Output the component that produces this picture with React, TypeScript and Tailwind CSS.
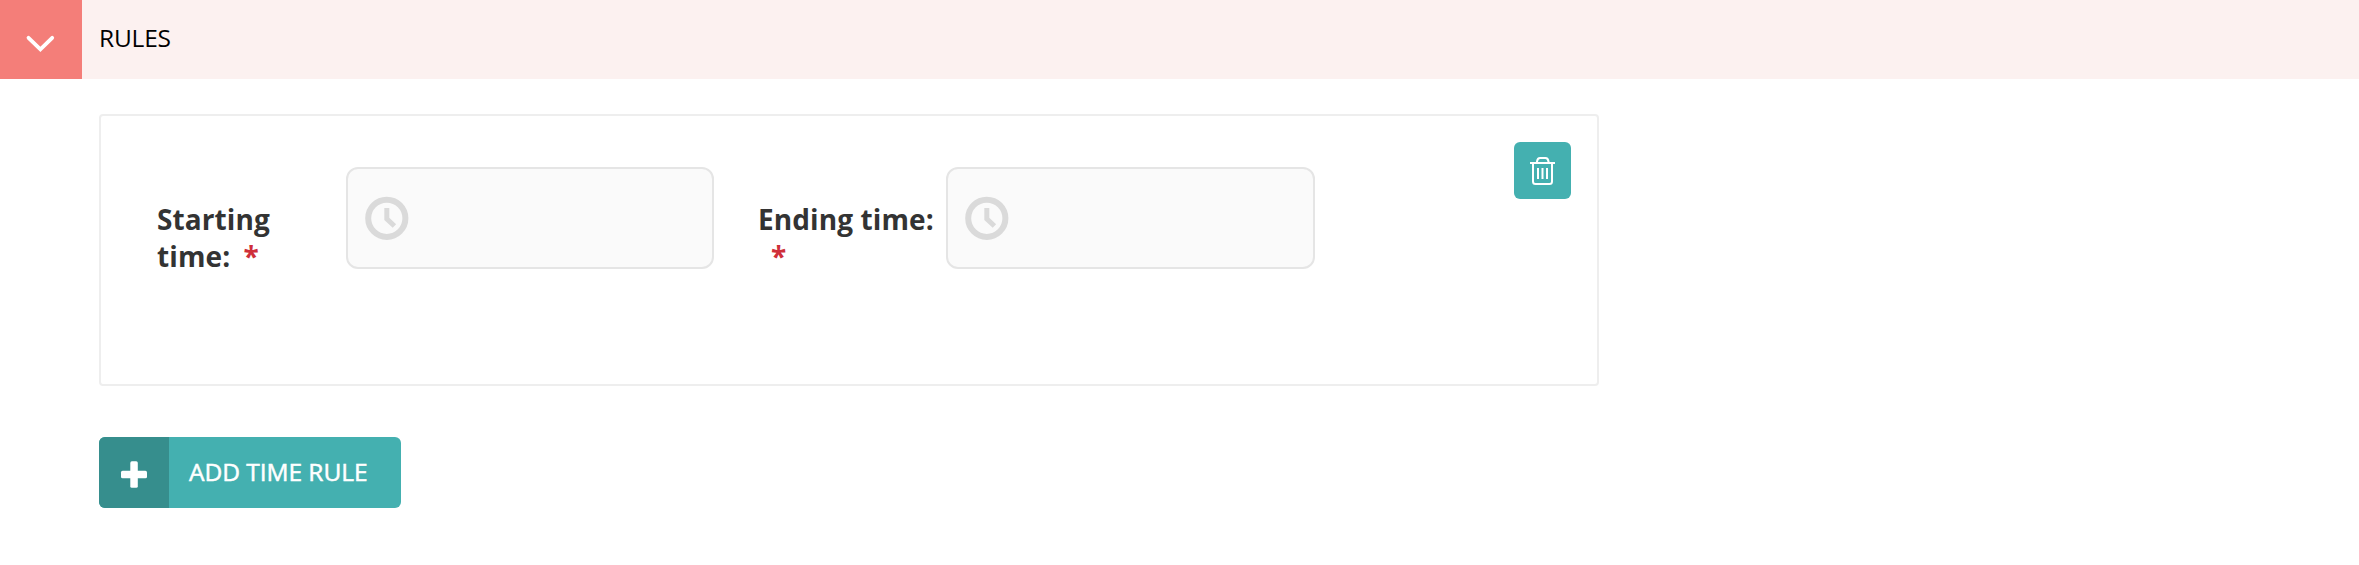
function TimeInput() {
  return (
    <div className="flex h-[102px] w-full items-center rounded-xl border-2 border-[#e5e5e5] bg-[#fafafa]">
      <svg className="ml-[17px] h-[44px] w-[44px]" viewBox="0 0 44 44" fill="none" stroke="#dadada">
        <circle cx="21.8" cy="22.3" r="18.6" strokeWidth="6" />
        <path d="M21.8 12V22.8L29.4 30" strokeWidth="5" />
      </svg>
    </div>
  );
}

export default function App() {
  return (
    <div className="h-[565px] w-full bg-white font-['Open_Sans',sans-serif]">
      <header className="flex h-[79px] bg-[#fcf1f0]">
        <div className="h-[79px] w-[82px] shrink-0 bg-[#f47e79]">
          <svg className="h-[79px] w-[82px]" viewBox="0 0 82 79" fill="none" stroke="#fff" strokeWidth="3.8" strokeLinecap="round">
            <path d="M28.5 37.8L40.4 49.4L52.2 37.8" strokeLinejoin="miter" />
          </svg>
        </div>
        <h1 className="ml-[17px] text-[24.5px] leading-[76px] tracking-[-0.2px] text-black">RULES</h1>
      </header>
      <main className="pl-[99px] pt-[35px]">
        <section className="flex h-[272px] w-[1500px] items-start rounded-[4px] border-2 border-[#eee] pl-[56px] pr-[26px] pt-[26px]">
          <label className="mt-[59px] w-[189px] shrink-0 pr-[50px] text-[28px] font-bold leading-[37px] tracking-[0.1px] text-[#333]">
            Starting time: <span className="ml-[6px] text-[#cf2f3a]">*</span>
          </label>
          <div className="mt-[25px] w-[368px] shrink-0">
            <TimeInput />
          </div>
          <label className="ml-[44px] mt-[59px] w-[188px] shrink-0 text-[28px] font-bold leading-[37px] tracking-[0.1px] text-[#333]">
            Ending time: <span className="ml-[13px] text-[#cf2f3a]">*</span>
          </label>
          <div className="mt-[25px] w-[369px] shrink-0">
            <TimeInput />
          </div>
          <button className="ml-auto h-[57px] w-[57px] rounded-[6px] bg-[#44b0b0]" aria-label="Delete">
            <svg className="h-[57px] w-[57px]" viewBox="0 0 57 57" fill="none" stroke="#fff" strokeWidth="2">
              <path d="M16 21H41M19 21V39.5Q19 42 21.5 42H35.5Q38 42 38 39.5V21M23 21V19.5Q23.5 16 26 16H31.5Q34 16 34.5 19.5V21M24 26V37M28.5 26V37M33 26V37" />
            </svg>
          </button>
        </section>
        <button className="mt-[51px] flex h-[71px] w-[302px] overflow-hidden rounded-[6px] bg-[#44b0b0] text-white">
          <span className="h-[71px] w-[70px] shrink-0 bg-[#368e8d]">
            <svg className="h-[71px] w-[70px]" viewBox="0 0 70 71" fill="#fff">
              <rect x="22" y="33.8" width="26" height="7.5" rx="1.6" />
              <rect x="31.3" y="24.3" width="7.5" height="26.5" rx="1.6" />
            </svg>
          </span>
          <span className="ml-[20px] whitespace-nowrap text-[24.5px] leading-[70px] tracking-[-0.05px] [-webkit-text-stroke:0.5px_white]">ADD TIME RULE</span>
        </button>
      </main>
    </div>
  );
}
